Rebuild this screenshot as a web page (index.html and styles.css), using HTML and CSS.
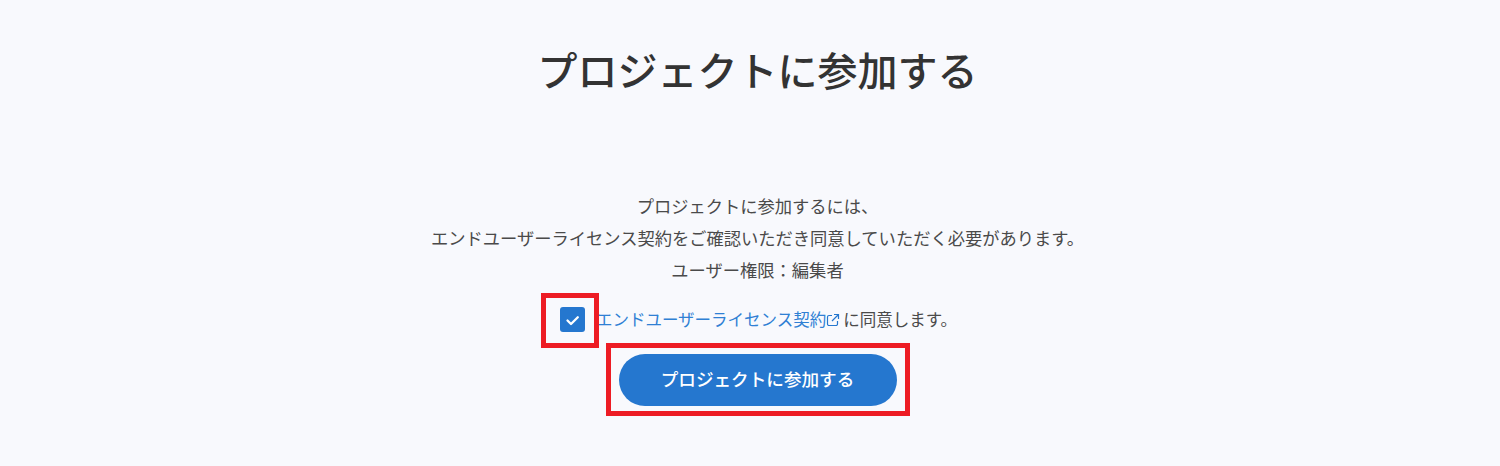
FILE: index.html
```html
<!DOCTYPE html>
<html lang="ja">
<head>
<meta charset="UTF-8" />
<title>プロジェクトに参加する</title>
<link rel="stylesheet" href="styles.css">
</head>
<body>

<div class="page">
  <h1>プロジェクトに参加する</h1>

  <div class="message">
    <p>プロジェクトに参加するには、</p>
    <p>エンドユーザーライセンス契約をご確認いただき同意していただく必要があります。</p>
    <p>ユーザー権限：編集者</p>
  </div>

  <div class="agree">
    <span class="checkbox marked-check">
      <svg viewBox="0 0 25 25" width="25" height="25">
        <path d="M7.500 13.500l3.500 3.500 6.800-6.800" fill="none" stroke="#fff" stroke-width="2.300" stroke-linecap="round" stroke-linejoin="round" />
      </svg>
    </span>
    <span class="agree-text">
      <a href="#">エンドユーザーライセンス契約<svg class="ext" viewBox="0 0 14 14" width="14" height="14">
        <path d="M6 2.500H3a1.500 1.500 0 0 0-1.500 1.500v7A1.500 1.500 0 0 0 3 12.500h7a1.500 1.500 0 0 0 1.500-1.500V8M8 1.500h4.500V6M12.500 1.500L6 8" fill="none" stroke="#2577cf" stroke-width="1.200" />
      </svg></a>に同意します。
    </span>
  </div>

  <button class="join marked-join">プロジェクトに参加する</button>
</div>

</body>
</html>
```

FILE: styles.css
```css
*, *::after {
  margin: 0; padding: 0; box-sizing: border-box;
}
body {
  background: #f8f9fd;
  color: #4a4a4a;
  font-family: "Noto Sans CJK JP", "Noto Sans", sans-serif;
  height: 466px;
  overflow: hidden;
}
.page {
  display: flex;
  flex-direction: column;
  align-items: center;
  padding: 39px 0 0 15px;
}
h1 {
  font-size: 40px;
  font-weight: 500;
  line-height: 60px;
  color: #333;
}
.message {
  margin-top: 91px;
  text-align: center;
  font-size: 17.280px;
  line-height: 32px;
}
.agree {
  display: flex;
  align-items: center;
  margin-top: 17px;
  margin-left: 2px;
  font-size: 16.500px;
  line-height: 32px;
}
.checkbox {
  position: relative;
  display: block;
  width: 25px;
  height: 25px;
  margin-right: 11px;
  background: #2577cf;
  border-radius: 3px;
}
.checkbox svg {
  display: block;
}
.agree-text a {
  color: #2f80d4;
  text-decoration: none;
}
.ext {
  margin-right: 3px;
  vertical-align: -1px;
}
.join {
  position: relative;
  display: block;
  width: 278px;
  height: 52px;
  margin-top: 19px;
  padding-bottom: 3px;
  background: #2577cf;
  border: none;
  border-radius: 26px;
  color: #fff;
  font-family: inherit;
  font-size: 17.600px;
  font-weight: 500;
}
/* red marks drawn over the screenshot */
.marked-check::after,
.marked-join::after {
  content: "";
  position: absolute;
  border: 5px solid #ed1c24;
}
.marked-check::after {
  left: -19px;
  top: -14px;
  width: 58px;
  height: 55px;
}
.marked-join::after {
  left: -13px;
  top: -11px;
  width: 304px;
  height: 73px;
}
```
